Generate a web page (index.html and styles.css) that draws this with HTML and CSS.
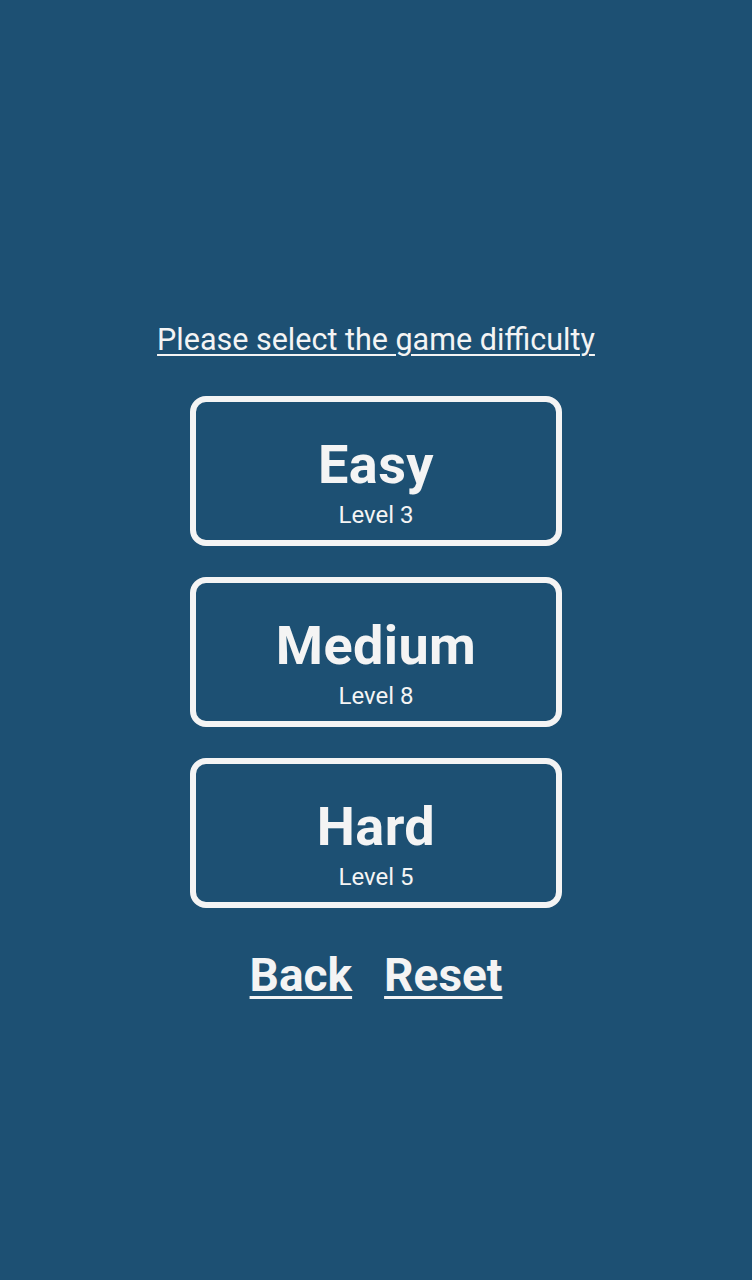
FILE: index.html
```html
<!DOCTYPE html>
<html>
<head>
<meta charset="utf-8">
<link rel="stylesheet" href="styles.css">
</head>
<body>
<main class="screen">
  <a class="prompt">Please select the game difficulty</a>
  <div class="options">
    <button class="option"><span class="name">Easy</span><span class="level">Level 3</span></button>
    <button class="option"><span class="name">Medium</span><span class="level">Level 8</span></button>
    <button class="option"><span class="name">Hard</span><span class="level">Level 5</span></button>
  </div>
  <nav class="actions">
    <a class="action">Back</a>
    <a class="action">Reset</a>
  </nav>
</main>
</body>
</html>
```
FILE: styles.css
```css
html, body {
  margin: 0;
  padding: 0;
  background: #1d5073;
}
body {
  font-family: Roboto, "Noto Sans", sans-serif;
  color: #f4f4f4;
}
.screen {
  width: 752px;
  height: 1280px;
  display: flex;
  flex-direction: column;
  align-items: center;
  padding-top: 320px;
  box-sizing: border-box;
}
.prompt {
  font-size: 30.5px;
  line-height: 40px;
  text-decoration: underline;
  text-underline-offset: 4px;
  text-decoration-thickness: 2px;
}
.options {
  margin-top: 36px;
  display: flex;
  flex-direction: column;
  gap: 31px;
}
.option {
  width: 372px;
  height: 150px;
  box-sizing: border-box;
  border: 6px solid #f4f4f4;
  border-radius: 16px;
  background: transparent;
  color: #f4f4f4;
  font-family: inherit;
  display: flex;
  flex-direction: column;
  align-items: center;
  justify-content: center;
  padding: 23px 0 0;
}
.name {
  font-size: 54px;
  font-weight: 700;
  line-height: 56px;
  letter-spacing: 0.4px;
}
.level {
  margin-top: 8px;
  font-size: 24px;
  line-height: 28px;
}
.actions {
  margin-top: 39px;
  display: flex;
  gap: 32px;
}
.action {
  font-size: 46px;
  font-weight: 700;
  line-height: 56px;
  text-decoration: underline;
  text-underline-offset: 5px;
  text-decoration-thickness: 3px;
}
```
